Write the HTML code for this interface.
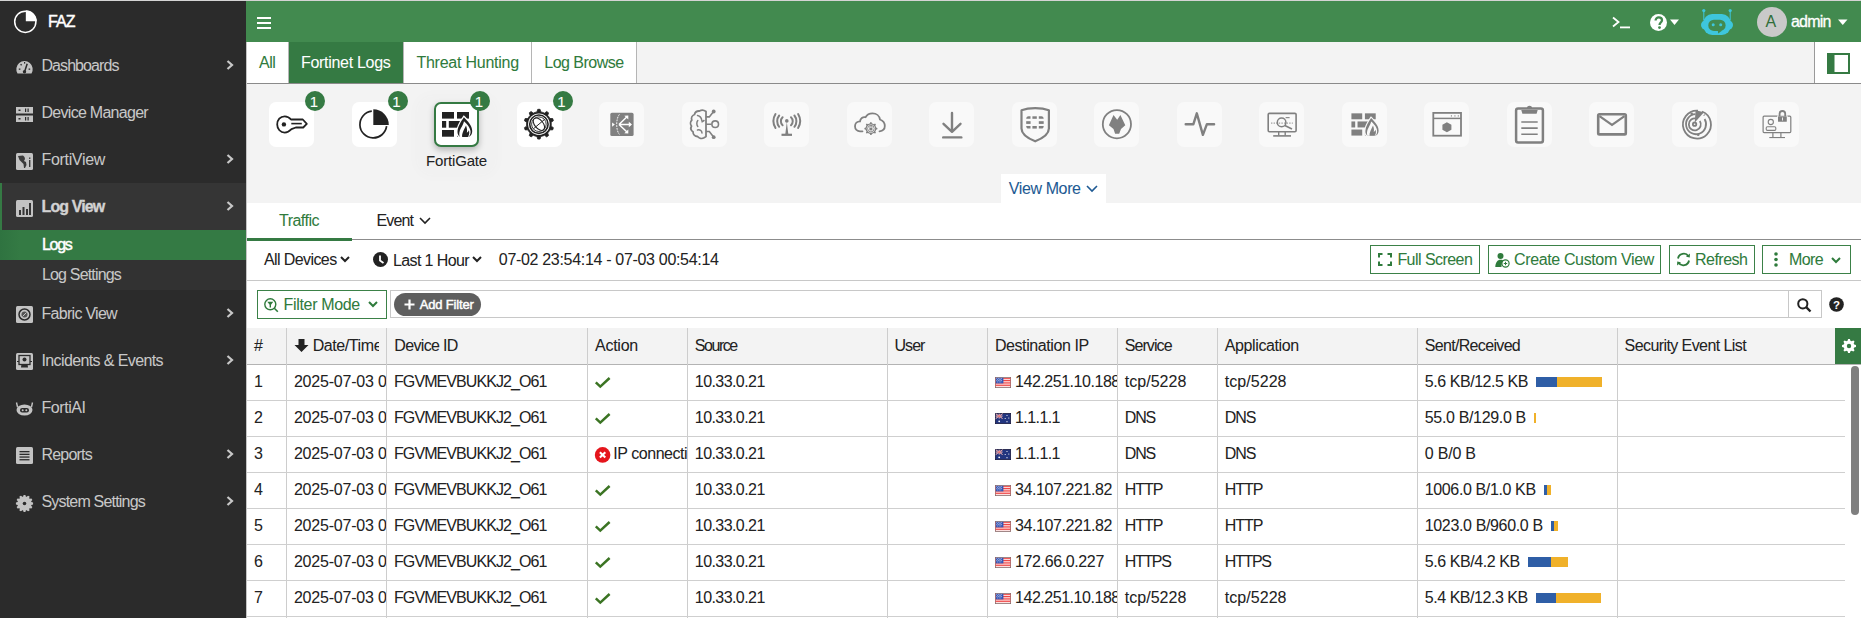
<!DOCTYPE html>
<html><head><meta charset="utf-8">
<style>
*{margin:0;padding:0;box-sizing:border-box}
html,body{width:1861px;height:618px;overflow:hidden;background:#fff;font-family:"Liberation Sans",sans-serif;color:#222;position:relative}
div{-webkit-text-stroke:0.05px currentColor}
svg{overflow:visible}
</style></head><body>
<div style="position:absolute;left:0px;top:0px;width:246px;height:618px;background:#2b2b2b"></div>
<div style="position:absolute;left:0px;top:183px;width:246px;height:47px;background:#353535"></div>
<div style="position:absolute;left:0px;top:183px;width:2px;height:47px;background:#357a44"></div>
<div style="position:absolute;left:0px;top:230px;width:246px;height:60px;background:#323232"></div>
<div style="position:absolute;left:0px;top:230px;width:246px;height:30px;background:linear-gradient(90deg,#2f7340 0px,#347a44 20px)"></div>
<svg style="position:absolute;left:13px;top:9px" width="25" height="25" viewBox="0 0 25 25"><circle cx="12.3" cy="12.8" r="10.6" fill="none" stroke="#fff" stroke-width="1.5"/><path d="M12.8 1.3 A11 11 0 0 1 23.8 12.3 L12.8 12.3 Z" fill="#fff"/></svg>
<div style="position:absolute;left:48.0px;top:14.45px;font-size:16px;line-height:16px;color:#fff;white-space:nowrap;letter-spacing:-0.953px;-webkit-text-stroke:0.45px #fff;">FAZ</div>
<div style="position:absolute;left:41.5px;top:58.45px;font-size:16px;line-height:16px;color:#c8c8c8;white-space:nowrap;letter-spacing:-0.933px;">Dashboards</div>
<svg style="position:absolute;left:226px;top:60px" width="8" height="10" viewBox="0 0 8 10"><path d="M1.5 1 L6 5 L1.5 9" fill="none" stroke="#c8c8c8" stroke-width="2.2"/></svg>
<div style="position:absolute;left:41.5px;top:105.45px;font-size:16px;line-height:16px;color:#c8c8c8;white-space:nowrap;letter-spacing:-0.720px;">Device Manager</div>
<div style="position:absolute;left:41.5px;top:152.45px;font-size:16px;line-height:16px;color:#c8c8c8;white-space:nowrap;letter-spacing:-0.328px;">FortiView</div>
<svg style="position:absolute;left:226px;top:154px" width="8" height="10" viewBox="0 0 8 10"><path d="M1.5 1 L6 5 L1.5 9" fill="none" stroke="#c8c8c8" stroke-width="2.2"/></svg>
<div style="position:absolute;left:41.5px;top:199.45px;font-size:16px;line-height:16px;color:#d2d2d2;white-space:nowrap;letter-spacing:-0.875px;font-weight:bold;-webkit-text-stroke:0.35px #d2d2d2;">Log View</div>
<svg style="position:absolute;left:226px;top:201px" width="8" height="10" viewBox="0 0 8 10"><path d="M1.5 1 L6 5 L1.5 9" fill="none" stroke="#c8c8c8" stroke-width="2.2"/></svg>
<div style="position:absolute;left:41.5px;top:306.45px;font-size:16px;line-height:16px;color:#c8c8c8;white-space:nowrap;letter-spacing:-0.714px;">Fabric View</div>
<svg style="position:absolute;left:226px;top:308px" width="8" height="10" viewBox="0 0 8 10"><path d="M1.5 1 L6 5 L1.5 9" fill="none" stroke="#c8c8c8" stroke-width="2.2"/></svg>
<div style="position:absolute;left:41.5px;top:353.45px;font-size:16px;line-height:16px;color:#c8c8c8;white-space:nowrap;letter-spacing:-0.617px;">Incidents &amp; Events</div>
<svg style="position:absolute;left:226px;top:355px" width="8" height="10" viewBox="0 0 8 10"><path d="M1.5 1 L6 5 L1.5 9" fill="none" stroke="#c8c8c8" stroke-width="2.2"/></svg>
<div style="position:absolute;left:41.5px;top:400.45px;font-size:16px;line-height:16px;color:#c8c8c8;white-space:nowrap;letter-spacing:-0.451px;">FortiAI</div>
<div style="position:absolute;left:41.5px;top:447.45px;font-size:16px;line-height:16px;color:#c8c8c8;white-space:nowrap;letter-spacing:-0.795px;">Reports</div>
<svg style="position:absolute;left:226px;top:449px" width="8" height="10" viewBox="0 0 8 10"><path d="M1.5 1 L6 5 L1.5 9" fill="none" stroke="#c8c8c8" stroke-width="2.2"/></svg>
<div style="position:absolute;left:41.5px;top:494.45px;font-size:16px;line-height:16px;color:#c8c8c8;white-space:nowrap;letter-spacing:-0.811px;">System Settings</div>
<svg style="position:absolute;left:226px;top:496px" width="8" height="10" viewBox="0 0 8 10"><path d="M1.5 1 L6 5 L1.5 9" fill="none" stroke="#c8c8c8" stroke-width="2.2"/></svg>
<div style="position:absolute;left:42.0px;top:236.75px;font-size:16px;line-height:16px;color:#fff;white-space:nowrap;letter-spacing:-1.305px;-webkit-text-stroke:0.45px #fff;">Logs</div>
<div style="position:absolute;left:42.0px;top:267.05px;font-size:16px;line-height:16px;color:#c8c8c8;white-space:nowrap;letter-spacing:-0.836px;">Log Settings</div>
<svg style="position:absolute;left:16px;top:59px" width="17" height="17" viewBox="0 0 17 17"><path d="M1.5 14.5 A8.2 8.2 0 1 1 15.5 14.5 Z" fill="#c3c3c3"/><path d="M8.5 13 L11.2 4.8" stroke="#2b2b2b" stroke-width="1.5"/><circle cx="8.5" cy="12.8" r="1.7" fill="#2b2b2b"/><rect x="2.8" y="9.5" width="1.6" height="1.3" fill="#2b2b2b"/><rect x="12.6" y="9.5" width="1.6" height="1.3" fill="#2b2b2b"/><rect x="4.5" y="5" width="1.3" height="1.5" fill="#2b2b2b" transform="rotate(-45 5.2 5.8)"/><rect x="8" y="3" width="1.2" height="1.6" fill="#2b2b2b"/></svg>
<svg style="position:absolute;left:16px;top:106px" width="17" height="17" viewBox="0 0 17 17"><rect x="0" y="1" width="17" height="6.5" fill="#c3c3c3"/><rect x="0" y="9.5" width="17" height="6.5" fill="#c3c3c3"/><rect x="2.5" y="3.5" width="2" height="1.5" fill="#2b2b2b"/><rect x="2.5" y="12" width="2" height="1.5" fill="#2b2b2b"/><rect x="9" y="2.5" width="1.2" height="3.5" fill="#2b2b2b"/><rect x="11.5" y="2.5" width="1.2" height="3.5" fill="#2b2b2b"/><rect x="9" y="11" width="1.2" height="3.5" fill="#2b2b2b"/><rect x="11.5" y="11" width="1.2" height="3.5" fill="#2b2b2b"/></svg>
<svg style="position:absolute;left:16px;top:153px" width="17" height="17" viewBox="0 0 17 17"><rect x="0" y="0" width="17" height="17" rx="1.5" fill="#c3c3c3"/><path d="M2 3 L7 2.5 L8.5 4 L9 6 L8 8 L10 9 L10.5 12 L9 15 L8 15 L7.5 11 L5.5 9 L3.5 7 Z" fill="#3a3a3a"/><rect x="13" y="7" width="1.4" height="7" fill="#3a3a3a"/><rect x="13" y="4.5" width="1.4" height="1.4" fill="#3a3a3a"/></svg>
<svg style="position:absolute;left:16px;top:200px" width="17" height="17" viewBox="0 0 17 17"><rect x="0" y="0" width="17" height="17" rx="1.5" fill="#c3c3c3"/><rect x="3" y="10" width="2" height="5" fill="#353535"/><rect x="6.5" y="7" width="2" height="8" fill="#353535"/><rect x="10" y="9" width="2" height="6" fill="#353535"/><rect x="13" y="3" width="2" height="12" fill="#353535"/></svg>
<svg style="position:absolute;left:16px;top:306px" width="17" height="17" viewBox="0 0 17 17"><rect x="0" y="0" width="17" height="17" rx="1.5" fill="#c3c3c3"/><circle cx="8.5" cy="8.5" r="5.5" fill="none" stroke="#2b2b2b" stroke-width="1.5"/><circle cx="8.5" cy="8.5" r="3" fill="#555"/><path d="M6.5 10.5 L10.5 6.5" stroke="#c3c3c3" stroke-width="1"/></svg>
<svg style="position:absolute;left:16px;top:353px" width="17" height="17" viewBox="0 0 17 17"><rect x="0" y="0" width="17" height="17" rx="1.5" fill="#c3c3c3"/><rect x="3" y="2.5" width="11" height="9" fill="none" stroke="#2b2b2b" stroke-width="1.3"/><circle cx="8.5" cy="6.5" r="2" fill="#2b2b2b"/><path d="M5 14.5 L5.5 11 L11.5 11 L12 14.5 Z" fill="#2b2b2b"/><rect x="1" y="8" width="2" height="1" fill="#2b2b2b"/><rect x="14" y="8" width="2" height="1" fill="#2b2b2b"/></svg>
<svg style="position:absolute;left:16px;top:399px" width="17" height="17" viewBox="0 0 17 17"><ellipse cx="8.5" cy="11" rx="8" ry="5.5" fill="#c3c3c3"/><path d="M1.5 8 L0.5 3.5 M15.5 8 L16.5 3.5" stroke="#c3c3c3" stroke-width="1.4"/><rect x="4" y="9" width="9" height="4.5" rx="2.2" fill="#2b2b2b"/><circle cx="6.7" cy="11.2" r="1" fill="#c3c3c3"/><circle cx="10.3" cy="11.2" r="1" fill="#c3c3c3"/></svg>
<svg style="position:absolute;left:16px;top:447px" width="17" height="17" viewBox="0 0 17 17"><rect x="0" y="0" width="17" height="17" rx="1.5" fill="#c3c3c3"/><rect x="3.5" y="4" width="10" height="1.3" fill="#2b2b2b"/><rect x="3.5" y="6.7" width="10" height="1.3" fill="#2b2b2b"/><rect x="3.5" y="9.4" width="10" height="1.3" fill="#2b2b2b"/><rect x="3.5" y="12.1" width="10" height="1.3" fill="#2b2b2b"/></svg>
<svg style="position:absolute;left:16px;top:495px" width="17" height="17" viewBox="0 0 17 17"><polygon points="17.10,8.50 17.05,9.40 15.35,9.96 15.16,10.66 16.36,12.00 15.95,12.80 15.46,13.55 13.70,13.18 13.18,13.70 13.55,15.46 12.80,15.95 12.00,16.36 10.66,15.16 9.96,15.35 9.40,17.05 8.50,17.10 7.60,17.05 7.04,15.35 6.34,15.16 5.00,16.36 4.20,15.95 3.45,15.46 3.82,13.70 3.30,13.18 1.54,13.55 1.05,12.80 0.64,12.00 1.84,10.66 1.65,9.96 -0.05,9.40 -0.10,8.50 -0.05,7.60 1.65,7.04 1.84,6.34 0.64,5.00 1.05,4.20 1.54,3.45 3.30,3.82 3.82,3.30 3.45,1.54 4.20,1.05 5.00,0.64 6.34,1.84 7.04,1.65 7.60,-0.05 8.50,-0.10 9.40,-0.05 9.96,1.65 10.66,1.84 12.00,0.64 12.80,1.05 13.55,1.54 13.18,3.30 13.70,3.82 15.46,3.45 15.95,4.20 16.36,5.00 15.16,6.34 15.35,7.04 17.05,7.60" fill="#c3c3c3"/><circle cx="8.5" cy="8.5" r="1.8" fill="#2b2b2b"/></svg>
<div style="position:absolute;left:246px;top:0px;width:1615px;height:42px;background:#428a4f"></div>
<div style="position:absolute;left:0px;top:0px;width:1861px;height:1px;background:#d4d4d4"></div>
<div style="position:absolute;left:256.5px;top:16.5px;width:14px;height:2px;background:#fff"></div>
<div style="position:absolute;left:256.5px;top:21.5px;width:14px;height:2px;background:#fff"></div>
<div style="position:absolute;left:256.5px;top:26.5px;width:14px;height:2px;background:#fff"></div>
<svg style="position:absolute;left:1612px;top:16px" width="19" height="13" viewBox="0 0 19 13"><path d="M1 1.5 L6.5 6 L1 10.5" fill="none" stroke="#fff" stroke-width="1.8"/><rect x="8" y="10.5" width="10" height="1.8" fill="#fff"/></svg>
<svg style="position:absolute;left:1650px;top:14px" width="30" height="18" viewBox="0 0 30 18"><circle cx="8.5" cy="8.5" r="8.5" fill="#fff"/><path d="M5.6 6.6 C5.6 4.6 7 3.3 8.8 3.3 C10.7 3.3 12 4.5 12 6.2 C12 8.3 9.6 8.6 9.6 10.5 L9.6 11" fill="none" stroke="#428a4f" stroke-width="2.3"/><circle cx="9.5" cy="13.6" r="1.4" fill="#428a4f"/><path d="M20 5.5 L29 5.5 L24.5 11 Z" fill="#fff"/></svg>
<svg style="position:absolute;left:1701px;top:8px" width="33" height="28" viewBox="0 0 33 28"><circle cx="2.8" cy="2.6" r="1.6" fill="#3ec6dc"/><circle cx="29.2" cy="2.6" r="1.6" fill="#3ec6dc"/><path d="M2.8 2.6 L2.8 12 M29.2 2.6 L29.2 12" stroke="#3ec6dc" stroke-width="1"/><rect x="2.2" y="6" width="27.6" height="21" rx="9" fill="#3ec6dc"/><rect x="0" y="12.5" width="32" height="9" rx="4.5" fill="#3ec6dc"/><rect x="7.3" y="11.7" width="17.3" height="11.3" rx="5.6" fill="#428a4f"/><path d="M16.8 22.5 L21.2 22.5 L17.2 25.6 Z" fill="#428a4f"/><circle cx="12.2" cy="16.8" r="1.5" fill="#3ec6dc"/><circle cx="19.7" cy="16.8" r="1.5" fill="#3ec6dc"/></svg>
<div style="position:absolute;left:1757px;top:7px;width:30px;height:30px;background:#c9c9c9;border-radius:50%"></div>
<div style="position:absolute;left:1765.5px;top:14.45px;font-size:16px;line-height:16px;color:#2f6e3a;white-space:nowrap;letter-spacing:2.328px;">A</div>
<div style="position:absolute;left:1791.0px;top:14.45px;font-size:16px;line-height:16px;color:#fff;white-space:nowrap;letter-spacing:-0.822px;-webkit-text-stroke:0.3px #fff;">admin</div>
<svg style="position:absolute;left:1838px;top:19px" width="10" height="7" viewBox="0 0 10 7"><path d="M0 0.5 L9.5 0.5 L4.75 6 Z" fill="#fff"/></svg>
<div style="position:absolute;left:246px;top:42px;width:1615px;height:42px;background:#f3f3f3"></div>
<div style="position:absolute;left:246px;top:83px;width:1615px;height:1px;background:#8a8a8a"></div>
<div style="position:absolute;left:246px;top:42px;width:42px;height:41px;background:#fff"></div>
<div style="position:absolute;left:288px;top:42px;width:115px;height:41px;background:#357a43"></div>
<div style="position:absolute;left:403px;top:42px;width:128px;height:41px;background:#fff;border-left:1px solid #b5b5b5"></div>
<div style="position:absolute;left:531px;top:42px;width:106px;height:41px;background:#fff;border-left:1px solid #b5b5b5;border-right:1px solid #b5b5b5"></div>
<div style="position:absolute;left:288px;top:42px;width:1px;height:41px;background:#b5b5b5"></div>
<div style="position:absolute;left:259.0px;top:55.45px;font-size:16px;line-height:16px;color:#2f7b3c;white-space:nowrap;letter-spacing:-0.499px;">All</div>
<div style="position:absolute;left:301.0px;top:55.45px;font-size:16px;line-height:16px;color:#fff;white-space:nowrap;letter-spacing:-0.298px;">Fortinet Logs</div>
<div style="position:absolute;left:416.4px;top:55.45px;font-size:16px;line-height:16px;color:#2f7b3c;white-space:nowrap;letter-spacing:-0.238px;">Threat Hunting</div>
<div style="position:absolute;left:544.3px;top:55.45px;font-size:16px;line-height:16px;color:#2f7b3c;white-space:nowrap;letter-spacing:-0.525px;">Log Browse</div>
<div style="position:absolute;left:1814px;top:42px;width:47px;height:41px;background:#fff;border-left:1px solid #9a9a9a"></div>
<svg style="position:absolute;left:1827px;top:53px" width="23" height="21" viewBox="0 0 23 21"><rect x="1" y="1" width="21" height="19" fill="none" stroke="#357a43" stroke-width="2"/><rect x="1" y="1" width="6.5" height="19" fill="#357a43"/></svg>
<div style="position:absolute;left:246px;top:84px;width:1615px;height:119px;background:#f3f3f3"></div>
<div style="position:absolute;left:269.0px;top:102px;width:45px;height:45px;background:#fff;border-radius:7px"></div>
<svg style="position:absolute;left:269.0px;top:102px" width="45" height="45" viewBox="0 0 45 45"><path d="M15.7 14.3 C11.2 14.3 8.2 18 8.2 22.5 C8.2 27 11.5 30.6 15.7 30.6 C18.5 30.6 20.5 29.3 22.5 27.2 L26.8 25.5 L34.2 25.5 L37.8 21.8 L33.8 17.5 L22 17.5 C20.3 15.3 18.2 14.3 15.7 14.3 Z" fill="none" stroke="#222" stroke-width="1.8" stroke-linejoin="round"/><circle cx="14.9" cy="22.4" r="2.2" fill="#222"/><path d="M22.3 21.6 L32.8 21.6" stroke="#222" stroke-width="1.6"/></svg>
<div style="position:absolute;left:305.0px;top:91px;width:20px;height:20px;background:#357a43;border-radius:50%"></div>
<div style="position:absolute;left:309.8px;top:93.90px;font-size:15px;line-height:15px;color:#fff;white-space:nowrap;letter-spacing:-0.344px;">1</div>
<div style="position:absolute;left:351.5px;top:102px;width:45px;height:45px;background:#fff;border-radius:7px"></div>
<svg style="position:absolute;left:351.5px;top:102px" width="45" height="45" viewBox="0 0 45 45"><path d="M19.8 9.2 A13.4 13.4 0 1 0 34.6 24.2" fill="none" stroke="#222" stroke-width="1.7"/><path d="M21.3 7.3 A15.5 15.5 0 0 1 36.8 22.9 L21.3 22.9 Z" fill="#222"/></svg>
<div style="position:absolute;left:387.5px;top:91px;width:20px;height:20px;background:#357a43;border-radius:50%"></div>
<div style="position:absolute;left:392.3px;top:93.90px;font-size:15px;line-height:15px;color:#fff;white-space:nowrap;letter-spacing:-0.344px;">1</div>
<div style="position:absolute;left:417.0px;top:96px;width:79px;height:79px;border-radius:16px;box-shadow:0 0 10px 4px rgba(0,0,0,0.012);background:rgba(0,0,0,0.008)"></div>
<div style="position:absolute;left:434.0px;top:102px;width:45px;height:45px;background:#fff;border:2px solid #357a43;border-radius:7px;box-shadow:0 3px 6px rgba(0,0,0,0.25)"></div>
<svg style="position:absolute;left:434.0px;top:102px" width="45" height="45" viewBox="0 0 45 45"><rect x="8" y="10" width="12" height="6.6" fill="#222"/><rect x="23" y="10" width="12" height="6.6" fill="#222"/><rect x="8" y="19" width="4.2" height="6.7" fill="#222"/><rect x="14.8" y="19" width="13" height="6.7" fill="#222"/><rect x="8" y="28" width="12" height="6.7" fill="#222"/><rect x="23" y="28" width="5" height="6.7" fill="#222"/><path d="M29.9 15.2 C33.5 19 38.2 23.5 38.2 29 C38.2 32.5 36.2 35 33.5 35 L26.3 35 C24.3 34 23.4 32 23.5 29.5 C23.7 24.5 27 19.5 29.9 15.2 Z" fill="#fff" stroke="#fff" stroke-width="2.6"/><path d="M29.9 15.2 C33.5 19 38.2 23.5 38.2 29 C38.2 32.5 36.2 35 33.5 35 L26.3 35 C24.3 34 23.4 32 23.5 29.5 C23.7 24.5 27 19.5 29.9 15.2 Z" fill="#222"/><path d="M25.8 35 C24.8 32.5 25.2 29 27 26 C28.3 23.8 29.5 21.5 30 19.2 C32.5 21.5 36.5 25.5 36.6 29.8 C36.6 32.2 35.6 34.2 34.2 35 Z" fill="#fff"/><path d="M28.2 35 C27.6 31.8 29.8 28 32 23.4 C33 26 33.4 28.6 32.8 30.8 C33.8 30.2 34.5 29.2 34.9 28.2 C35.6 30.4 35.3 33 33.8 35 Z" fill="#222"/></svg>
<div style="position:absolute;left:470.0px;top:91px;width:20px;height:20px;background:#357a43;border-radius:50%"></div>
<div style="position:absolute;left:474.8px;top:93.90px;font-size:15px;line-height:15px;color:#fff;white-space:nowrap;letter-spacing:-0.344px;">1</div>
<div style="position:absolute;left:516.5px;top:102px;width:45px;height:45px;background:#fff;border-radius:7px"></div>
<svg style="position:absolute;left:516.5px;top:102px" width="45" height="45" viewBox="0 0 45 45"><polygon points="21.90,7.30 23.07,7.35 23.84,9.95 24.79,10.14 25.73,10.41 26.65,10.74 27.53,11.15 29.69,9.50 30.66,10.15 31.58,10.87 30.67,13.43 31.33,14.15 31.93,14.91 32.47,15.72 32.95,16.57 35.67,16.50 36.07,17.60 36.39,18.72 34.15,20.26 34.26,21.23 34.30,22.20 34.26,23.17 34.15,24.14 36.39,25.68 36.07,26.80 35.67,27.90 32.95,27.83 32.47,28.68 31.93,29.49 31.33,30.25 30.67,30.97 31.58,33.53 30.66,34.25 29.69,34.90 27.53,33.25 26.65,33.66 25.73,33.99 24.79,34.26 23.84,34.45 23.07,37.05 21.90,37.10 20.73,37.05 19.96,34.45 19.01,34.26 18.07,33.99 17.15,33.66 16.27,33.25 14.11,34.90 13.14,34.25 12.22,33.53 13.13,30.97 12.47,30.25 11.87,29.49 11.33,28.68 10.85,27.83 8.13,27.90 7.73,26.80 7.41,25.68 9.65,24.14 9.54,23.17 9.50,22.20 9.54,21.23 9.65,20.26 7.41,18.72 7.73,17.60 8.13,16.50 10.85,16.57 11.33,15.72 11.87,14.91 12.47,14.15 13.13,13.43 12.22,10.87 13.14,10.15 14.11,9.50 16.27,11.15 17.15,10.74 18.07,10.41 19.01,10.14 19.96,9.95 20.73,7.35" fill="#222" stroke="#222" stroke-width="0.8" stroke-linejoin="round"/><circle cx="21.9" cy="22.2" r="10.8" fill="#fff"/><circle cx="21.9" cy="22.2" r="9.2" fill="none" stroke="#222" stroke-width="1.6"/><circle cx="21.9" cy="22.2" r="7.3" fill="none" stroke="#222" stroke-width="0.9"/><g transform="rotate(-40 21.9 22.2)"><ellipse cx="21.9" cy="22.2" rx="4.2" ry="7.3" fill="none" stroke="#222" stroke-width="1.1"/><path d="M14.6 22.2 L29.2 22.2" stroke="#222" stroke-width="0.9"/></g></svg>
<div style="position:absolute;left:552.5px;top:91px;width:20px;height:20px;background:#357a43;border-radius:50%"></div>
<div style="position:absolute;left:557.3px;top:93.90px;font-size:15px;line-height:15px;color:#fff;white-space:nowrap;letter-spacing:-0.344px;">1</div>
<div style="position:absolute;left:599.0px;top:102px;width:45px;height:45px;background:#f9f9f9;border-radius:7px"></div>
<svg style="position:absolute;left:599.0px;top:102px" width="45" height="45" viewBox="0 0 45 45"><rect x="11.3" y="10.8" width="23.3" height="23.3" rx="1.6" fill="#808080"/><path d="M20.4 12.4 C16.8 16.5 16.8 28.5 20.4 32.4" fill="none" stroke="#fff" stroke-width="0.9" stroke-dasharray="1.8 1"/><path d="M13.1 20.4 L15.8 22.5 L13.1 24.7 Z" fill="#fff"/><path d="M20 22.5 L31.5 22.5 M20 22.5 L28 14.8 M20 22.5 L28 30" fill="none" stroke="#fff" stroke-width="1.5"/><path d="M29.8 19.8 L33 22.5 L29.8 25.2 Z M29.3 13.4 L29.3 17.5 L25.3 13.8 Z M29.3 31.6 L29.3 27.5 L25.3 31.2 Z" fill="#fff"/></svg>
<div style="position:absolute;left:681.5px;top:102px;width:45px;height:45px;background:#f9f9f9;border-radius:7px"></div>
<svg style="position:absolute;left:681.5px;top:102px" width="45" height="45" viewBox="0 0 45 45"><path d="M24 9.5 C22 8 19.5 7.8 17.5 9 C15 8.8 13 10.5 12.5 12.5 C10 13.5 9 16 9.8 18.2 C8.2 19.8 8.2 22.5 9.5 24 C8.5 26 9 28.5 11 29.8 C11 32.5 13 34.5 15.5 34.5 C17 36.3 20 37 22 35.8 L24 34.5 Z" fill="none" stroke="#808080" stroke-width="1.8" stroke-linejoin="round"/><path d="M15.5 13.5 C18 14 19.5 16 19.8 18.5 M15.8 18.5 C14.5 20 14.5 23 15.8 24.5 M15.5 28 C18 27.5 19.8 28.5 20 31 M20 19.8 L22 18.5" fill="none" stroke="#808080" stroke-width="1.5" stroke-linecap="round"/><path d="M24 14.9 L27.3 14.9 L31.2 10 M24 22.2 L29.5 22.2 M24 29.5 L27.3 29.5 L31.2 34.6" fill="none" stroke="#808080" stroke-width="1.6"/><circle cx="31.7" cy="9.5" r="1.9" fill="#808080"/><circle cx="33.2" cy="22.2" r="3.3" fill="none" stroke="#808080" stroke-width="1.6"/><circle cx="31.7" cy="35.2" r="1.9" fill="#808080"/></svg>
<div style="position:absolute;left:764.0px;top:102px;width:45px;height:45px;background:#f9f9f9;border-radius:7px"></div>
<svg style="position:absolute;left:764.0px;top:102px" width="45" height="45" viewBox="0 0 45 45"><circle cx="22.8" cy="18.9" r="1.8" fill="#808080"/><path d="M22.8 20 L21.3 32 L24.3 32 Z" fill="#808080"/><rect x="17.5" y="31.7" width="10.5" height="2.2" fill="#808080"/><g fill="none" stroke="#808080" stroke-width="2" stroke-linecap="round"><path d="M18.6 15.2 A5.5 5.5 0 0 0 18.6 23.2 M27 15.2 A5.5 5.5 0 0 1 27 23.2"/><path d="M15.2 13.5 A9 9 0 0 0 15.2 24.8 M30.4 13.5 A9 9 0 0 1 30.4 24.8"/><path d="M11.5 12 A13.5 13.5 0 0 0 11.5 26 M34.1 12 A13.5 13.5 0 0 1 34.1 26"/></g></svg>
<div style="position:absolute;left:846.5px;top:102px;width:45px;height:45px;background:#f9f9f9;border-radius:7px"></div>
<svg style="position:absolute;left:846.5px;top:102px" width="45" height="45" viewBox="0 0 45 45"><path d="M15.5 29.3 L13 29.3 C10.2 29.3 8 27.2 8 24.3 C8 21.5 10.2 19.3 13 19.3 C13.3 16.5 15.8 14.5 18.5 15.2 C20 12.5 22.5 11.3 25.5 11.3 C29.5 11.3 32.5 14 33 17.5 C35.8 18.5 37.8 21 37.8 24 C37.8 26.8 35.8 29 32.5 29.3" fill="none" stroke="#808080" stroke-width="1.8" stroke-linecap="round"/><polygon points="30.40,26.60 30.37,27.24 29.10,27.63 28.97,28.14 28.80,28.63 28.57,29.10 28.31,29.54 28.92,30.72 28.50,31.20 28.02,31.62 26.84,31.01 26.40,31.27 25.93,31.50 25.44,31.67 24.93,31.80 24.54,33.07 23.90,33.10 23.26,33.07 22.87,31.80 22.36,31.67 21.87,31.50 21.40,31.27 20.96,31.01 19.78,31.62 19.30,31.20 18.88,30.72 19.49,29.54 19.23,29.10 19.00,28.63 18.83,28.14 18.70,27.63 17.43,27.24 17.40,26.60 17.43,25.96 18.70,25.57 18.83,25.06 19.00,24.57 19.23,24.10 19.49,23.66 18.88,22.48 19.30,22.00 19.78,21.58 20.96,22.19 21.40,21.93 21.87,21.70 22.36,21.53 22.87,21.40 23.26,20.13 23.90,20.10 24.54,20.13 24.93,21.40 25.44,21.53 25.93,21.70 26.40,21.93 26.84,22.19 28.02,21.58 28.50,22.00 28.92,22.48 28.31,23.66 28.57,24.10 28.80,24.57 28.97,25.06 29.10,25.57 30.37,25.96" fill="#808080"/><circle cx="23.9" cy="26.6" r="4.2" fill="#fafafa"/><circle cx="23.9" cy="26.6" r="3.3" fill="none" stroke="#808080" stroke-width="0.9"/><rect x="22.4" y="25.8" width="3" height="2.6" fill="#808080"/><path d="M22.9 25.8 L22.9 24.8 A1 1 0 0 1 24.9 24.8 L24.9 25.8" fill="none" stroke="#808080" stroke-width="0.8"/></svg>
<div style="position:absolute;left:929.0px;top:102px;width:45px;height:45px;background:#f9f9f9;border-radius:7px"></div>
<svg style="position:absolute;left:929.0px;top:102px" width="45" height="45" viewBox="0 0 45 45"><path d="M23 11 L23 29 M14.5 21.8 L23 29.8 L31.5 21.8" fill="none" stroke="#808080" stroke-width="2.4" stroke-linecap="round" stroke-linejoin="round"/><rect x="13" y="34.2" width="20.5" height="2.4" rx="1.2" fill="#808080"/></svg>
<div style="position:absolute;left:1011.5px;top:102px;width:45px;height:45px;background:#f9f9f9;border-radius:7px"></div>
<svg style="position:absolute;left:1011.5px;top:102px" width="45" height="45" viewBox="0 0 45 45"><path d="M23.2 6.2 C18 6.2 13 7 9.5 8.3 L9.5 26.5 C9.5 32 15 36 23.2 39.3 C31.4 36 36.9 32 36.9 26.5 L36.9 8.3 C33.4 7 28.4 6.2 23.2 6.2 Z" fill="none" stroke="#808080" stroke-width="2.2" stroke-linejoin="round"/><g fill="#808080"><path d="M14.2 17.4 C14.2 15.5 15 14.3 16.5 14.3 L18.5 14.3 L18.5 16.7 L14.2 16.7 Z"/><rect x="20.4" y="14.3" width="4.4" height="2.5"/><path d="M26.8 14.3 L29.4 14.3 C30.9 14.3 31.7 15.5 31.7 17.4 L31.7 16.7 L26.8 16.7 Z"/><rect x="14.2" y="19.2" width="4.4" height="2.7"/><rect x="26.8" y="19.2" width="4.9" height="2.7"/><path d="M14.2 24 L18.5 24 L18.5 26.6 L16.5 26.6 C15 26.6 14.2 25.6 14.2 24 Z"/><rect x="20.4" y="24" width="4.4" height="2.6"/><path d="M26.8 24 L31.7 24 C31.7 25.6 30.9 26.6 29.4 26.6 L26.8 26.6 Z"/></g></svg>
<div style="position:absolute;left:1094.0px;top:102px;width:45px;height:45px;background:#f9f9f9;border-radius:7px"></div>
<svg style="position:absolute;left:1094.0px;top:102px" width="45" height="45" viewBox="0 0 45 45"><circle cx="22.9" cy="22.2" r="14.1" fill="none" stroke="#808080" stroke-width="1.8"/><path d="M19.5 13.1 L23.2 17.8 L26.4 13.1 L31.3 23.3 L27 27 L25.2 31.7 L21.1 31.7 L19.5 27 L14.9 23.3 Z" fill="#808080"/></svg>
<div style="position:absolute;left:1176.5px;top:102px;width:45px;height:45px;background:#f9f9f9;border-radius:7px"></div>
<svg style="position:absolute;left:1176.5px;top:102px" width="45" height="45" viewBox="0 0 45 45"><path d="M8.7 22.2 L16.4 22.2 L19.8 11.3 L25.9 32.8 L29.9 22.2 L37.1 22.2" fill="none" stroke="#808080" stroke-width="2.4" stroke-linecap="round" stroke-linejoin="round"/></svg>
<div style="position:absolute;left:1259.0px;top:102px;width:45px;height:45px;background:#f9f9f9;border-radius:7px"></div>
<svg style="position:absolute;left:1259.0px;top:102px" width="45" height="45" viewBox="0 0 45 45"><rect x="9.2" y="11.4" width="27.9" height="18.4" rx="1.2" fill="none" stroke="#808080" stroke-width="1.6"/><path d="M19.7 30 L19.7 33.5 M26.2 30 L26.2 33.5" stroke="#808080" stroke-width="1.4"/><rect x="14.2" y="33.1" width="17.8" height="1.6" fill="#808080"/><circle cx="22.6" cy="20.4" r="4.3" fill="none" stroke="#808080" stroke-width="1.5"/><path d="M25.8 23.6 L33 27" stroke="#808080" stroke-width="1.7"/><path d="M12 21.1 L33.9 21.1" stroke="#808080" stroke-width="0.9" stroke-dasharray="1.4 1.2"/><rect x="26.6" y="15.1" width="4" height="1.1" fill="#808080"/></svg>
<div style="position:absolute;left:1341.5px;top:102px;width:45px;height:45px;background:#f9f9f9;border-radius:7px"></div>
<svg style="position:absolute;left:1341.5px;top:102px" width="45" height="45" viewBox="0 0 45 45"><g transform="translate(23 22.5) scale(0.9) translate(-23.1 -22.4)"><rect x="8" y="10" width="12" height="6.6" fill="#808080"/><rect x="23" y="10" width="12" height="6.6" fill="#808080"/><rect x="8" y="19" width="4.2" height="6.7" fill="#808080"/><rect x="14.8" y="19" width="13" height="6.7" fill="#808080"/><rect x="8" y="28" width="12" height="6.7" fill="#808080"/><rect x="23" y="28" width="5" height="6.7" fill="#808080"/><path d="M29.9 15.2 C33.5 19 38.2 23.5 38.2 29 C38.2 32.5 36.2 35 33.5 35 L26.3 35 C24.3 34 23.4 32 23.5 29.5 C23.7 24.5 27 19.5 29.9 15.2 Z" fill="#f9f9f9" stroke="#f9f9f9" stroke-width="2.6"/><path d="M29.9 15.2 C33.5 19 38.2 23.5 38.2 29 C38.2 32.5 36.2 35 33.5 35 L26.3 35 C24.3 34 23.4 32 23.5 29.5 C23.7 24.5 27 19.5 29.9 15.2 Z" fill="#808080"/><path d="M25.8 35 C24.8 32.5 25.2 29 27 26 C28.3 23.8 29.5 21.5 30 19.2 C32.5 21.5 36.5 25.5 36.6 29.8 C36.6 32.2 35.6 34.2 34.2 35 Z" fill="#f9f9f9"/><path d="M28.2 35 C27.6 31.8 29.8 28 32 23.4 C33 26 33.4 28.6 32.8 30.8 C33.8 30.2 34.5 29.2 34.9 28.2 C35.6 30.4 35.3 33 33.8 35 Z" fill="#808080"/></g></svg>
<div style="position:absolute;left:1424.0px;top:102px;width:45px;height:45px;background:#f9f9f9;border-radius:7px"></div>
<svg style="position:absolute;left:1424.0px;top:102px" width="45" height="45" viewBox="0 0 45 45"><rect x="9.3" y="10.9" width="27.7" height="22.8" fill="none" stroke="#808080" stroke-width="1.8"/><path d="M9.3 16.4 L37 16.4" stroke="#808080" stroke-width="1.5"/><rect x="26.9" y="13.2" width="0.9" height="1.4" fill="#808080"/><rect x="30.5" y="13.2" width="0.9" height="1.4" fill="#808080"/><rect x="33.8" y="13.2" width="0.9" height="1.4" fill="#808080"/><polygon points="22.9,20.3 27.4,22.8 27.4,27.8 22.9,30.3 18.4,27.8 18.4,22.8" fill="#808080"/></svg>
<div style="position:absolute;left:1506.5px;top:102px;width:45px;height:45px;background:#f9f9f9;border-radius:7px"></div>
<svg style="position:absolute;left:1506.5px;top:102px" width="45" height="45" viewBox="0 0 45 45"><rect x="9.1" y="6.5" width="26.8" height="34" rx="2" fill="none" stroke="#808080" stroke-width="2.5"/><path d="M14.3 8 L30.7 8 L29.6 11.7 L15.4 11.7 Z" fill="#808080"/><path d="M19.8 6.5 A2.7 2.7 0 0 1 25.2 6.5" fill="#808080"/><path d="M14.3 20 L30.7 20 M14.3 26.1 L30.7 26.1 M14.3 32.2 L30.7 32.2" stroke="#808080" stroke-width="1.6"/></svg>
<div style="position:absolute;left:1589.0px;top:102px;width:45px;height:45px;background:#f9f9f9;border-radius:7px"></div>
<svg style="position:absolute;left:1589.0px;top:102px" width="45" height="45" viewBox="0 0 45 45"><rect x="9.2" y="12.3" width="27.6" height="20.1" rx="1.2" fill="none" stroke="#808080" stroke-width="2.6"/><path d="M10.5 14.2 L23 22.8 L35.5 14.2" fill="none" stroke="#808080" stroke-width="2.2"/></svg>
<div style="position:absolute;left:1671.5px;top:102px;width:45px;height:45px;background:#f9f9f9;border-radius:7px"></div>
<svg style="position:absolute;left:1671.5px;top:102px" width="45" height="45" viewBox="0 0 45 45"><g fill="none" stroke="#808080" stroke-width="1.8"><path d="M30 9.5 A14 14 0 1 1 26 8.6"/><path d="M32.5 13.5 A14 14 0 0 0 32 12.8" /><path d="M32.6 17 A10 10 0 1 1 23.5 12.2"/><path d="M27.8 19 A6 6 0 1 1 24.5 16.6"/><circle cx="22.6" cy="22.2" r="1.7"/></g><path d="M22.8 20.5 L23.6 8.2 L32 10.3 Z" fill="#808080"/><circle cx="19.7" cy="11.7" r="1.3" fill="#808080"/><circle cx="26.2" cy="32.8" r="1.3" fill="#808080"/></svg>
<div style="position:absolute;left:1754.0px;top:102px;width:45px;height:45px;background:#f9f9f9;border-radius:7px"></div>
<svg style="position:absolute;left:1754.0px;top:102px" width="45" height="45" viewBox="0 0 45 45"><rect x="9.1" y="14.2" width="27.7" height="16.4" rx="1" fill="none" stroke="#808080" stroke-width="1.2"/><path d="M18.9 30.6 L18.9 35 M26.9 30.6 L26.9 35" stroke="#808080" stroke-width="1.2"/><rect x="15.3" y="35" width="15.7" height="1.1" fill="#808080"/><circle cx="16.8" cy="20" r="2.6" fill="none" stroke="#808080" stroke-width="1.1"/><rect x="12.2" y="24.8" width="9.6" height="3.6" rx="1.2" fill="none" stroke="#808080" stroke-width="1.1"/><rect x="23.2" y="13.4" width="10.4" height="7.1" fill="#f9f9f9"/><rect x="24" y="14.2" width="8.8" height="5.6" rx="0.6" fill="#808080"/><path d="M25.6 14.2 L25.6 11.8 A2.8 2.8 0 0 1 31.2 11.8 L31.2 14.2" fill="none" stroke="#808080" stroke-width="1.8"/><rect x="28" y="15.5" width="0.9" height="3" fill="#f9f9f9"/></svg>
<div style="position:absolute;left:426.0px;top:152.70px;font-size:15px;line-height:15px;color:#222;white-space:nowrap;letter-spacing:-0.170px;">FortiGate</div>
<div style="position:absolute;left:1001px;top:174px;width:105px;height:29px;background:#fff"></div>
<div style="position:absolute;left:1008.7px;top:181.45px;font-size:16px;line-height:16px;color:#1e5a93;white-space:nowrap;letter-spacing:-0.372px;">View More</div>
<svg style="position:absolute;left:1086px;top:185px" width="12" height="8" viewBox="0 0 12 8"><path d="M1 1 L6 6 L11 1" fill="none" stroke="#1e5a93" stroke-width="1.6"/></svg>
<div style="position:absolute;left:246px;top:203px;width:1615px;height:415px;background:#fff"></div>
<div style="position:absolute;left:246px;top:239px;width:1615px;height:1px;background:#8c8c8c"></div>
<div style="position:absolute;left:247px;top:238px;width:105px;height:3px;background:#357a43"></div>
<div style="position:absolute;left:279.0px;top:213.25px;font-size:16px;line-height:16px;color:#2f7b3c;white-space:nowrap;letter-spacing:-0.516px;">Traffic</div>
<div style="position:absolute;left:376.6px;top:213.25px;font-size:16px;line-height:16px;color:#222;white-space:nowrap;letter-spacing:-0.908px;">Event</div>
<svg style="position:absolute;left:419px;top:217px" width="12" height="8" viewBox="0 0 12 8"><path d="M1 1 L6 6 L11 1" fill="none" stroke="#222" stroke-width="1.6"/></svg>
<div style="position:absolute;left:264.0px;top:252.25px;font-size:16px;line-height:16px;color:#222;white-space:nowrap;letter-spacing:-0.599px;">All Devices</div>
<svg style="position:absolute;left:340px;top:255.8px" width="10" height="7" viewBox="0 0 10 7"><path d="M1 1 L5 5 L9 1" fill="none" stroke="#222" stroke-width="2"/></svg>
<svg style="position:absolute;left:373px;top:252px" width="15" height="15" viewBox="0 0 15 15"><circle cx="7.5" cy="7.5" r="7.5" fill="#222"/><path d="M7 3.5 L7 8.5 L10.5 11" fill="none" stroke="#fff" stroke-width="1.8"/></svg>
<div style="position:absolute;left:393.0px;top:252.75px;font-size:16px;line-height:16px;color:#222;white-space:nowrap;letter-spacing:-0.616px;">Last 1 Hour</div>
<svg style="position:absolute;left:472px;top:255.8px" width="10" height="7" viewBox="0 0 10 7"><path d="M1 1 L5 5 L9 1" fill="none" stroke="#222" stroke-width="2"/></svg>
<div style="position:absolute;left:498.8px;top:252.25px;font-size:16px;line-height:16px;color:#222;white-space:nowrap;letter-spacing:-0.314px;">07-02 23:54:14 - 07-03 00:54:14</div>
<div style="position:absolute;left:246px;top:280px;width:1615px;height:1px;background:#c8c8c8"></div>
<div style="position:absolute;left:1370px;top:245px;width:110px;height:29px;border:1px solid #3b8147"></div>
<div style="position:absolute;left:1488px;top:245px;width:173px;height:29px;border:1px solid #3b8147"></div>
<div style="position:absolute;left:1669px;top:245px;width:86px;height:29px;border:1px solid #3b8147"></div>
<div style="position:absolute;left:1762px;top:245px;width:89px;height:29px;border:1px solid #3b8147"></div>
<svg style="position:absolute;left:1378px;top:253px" width="14" height="13" viewBox="0 0 14 13"><path d="M1 4.5 L1 1 L4.5 1 M9.5 1 L13 1 L13 4.5 M13 8.5 L13 12 L9.5 12 M4.5 12 L1 12 L1 8.5" fill="none" stroke="#2f7b3c" stroke-width="2"/></svg>
<div style="position:absolute;left:1397.4px;top:252.25px;font-size:16px;line-height:16px;color:#2f7b3c;white-space:nowrap;letter-spacing:-0.544px;">Full Screen</div>
<svg style="position:absolute;left:1494.5px;top:252.5px" width="15" height="14" viewBox="0 0 15 14"><circle cx="5.5" cy="3" r="3" fill="#2f7b3c"/><path d="M0.3 14 C0.5 9.5 2.5 6.8 5.5 6.8 C7 6.8 8 7.3 8.7 8 C7.2 9 6.5 11 6.5 14 Z" fill="#2f7b3c"/><circle cx="10.5" cy="10.5" r="3.6" fill="#fff" stroke="#2f7b3c" stroke-width="1.2"/><path d="M10.5 8.8 L10.5 12.2 M8.8 10.5 L12.2 10.5" stroke="#2f7b3c" stroke-width="1"/></svg>
<div style="position:absolute;left:1514.0px;top:252.25px;font-size:16px;line-height:16px;color:#2f7b3c;white-space:nowrap;letter-spacing:-0.364px;">Create Custom View</div>
<svg style="position:absolute;left:1676px;top:252px" width="15" height="15" viewBox="0 0 15 15"><path d="M2 6.5 A5.8 5.8 0 0 1 12.5 4.2 M13 8.5 A5.8 5.8 0 0 1 2.5 10.8" fill="none" stroke="#2f7b3c" stroke-width="1.9"/><path d="M10 4.8 L13.8 5.6 L13.9 1.5 Z M5 10.2 L1.2 9.4 L1.1 13.5 Z" fill="#2f7b3c"/></svg>
<div style="position:absolute;left:1695.0px;top:252.25px;font-size:16px;line-height:16px;color:#2f7b3c;white-space:nowrap;letter-spacing:-0.509px;">Refresh</div>
<svg style="position:absolute;left:1774px;top:252px" width="4" height="15" viewBox="0 0 4 15"><circle cx="2" cy="2" r="1.8" fill="#2f7b3c"/><circle cx="2" cy="7.5" r="1.8" fill="#2f7b3c"/><circle cx="2" cy="13" r="1.8" fill="#2f7b3c"/></svg>
<div style="position:absolute;left:1789.0px;top:252.25px;font-size:16px;line-height:16px;color:#2f7b3c;white-space:nowrap;letter-spacing:-0.617px;">More</div>
<svg style="position:absolute;left:1831px;top:256.5px" width="10" height="7" viewBox="0 0 10 7"><path d="M1 1 L5 5 L9 1" fill="none" stroke="#2f7b3c" stroke-width="2"/></svg>
<div style="position:absolute;left:257px;top:290px;width:130px;height:29px;border:1px solid #3b8147"></div>
<svg style="position:absolute;left:264px;top:298px" width="15" height="15" viewBox="0 0 15 15"><circle cx="6.3" cy="6.3" r="5.5" fill="none" stroke="#2f7b3c" stroke-width="1.4"/><path d="M10.3 10.3 L13.8 13.8" stroke="#2f7b3c" stroke-width="1.6"/><path d="M3.3 3.8 L9.3 3.8 L7 6.8 L7 9.5 L5.6 9.5 L5.6 6.8 Z" fill="#2f7b3c"/></svg>
<div style="position:absolute;left:283.6px;top:297.25px;font-size:16px;line-height:16px;color:#2f7b3c;white-space:nowrap;letter-spacing:-0.336px;">Filter Mode</div>
<svg style="position:absolute;left:368px;top:301px" width="10" height="7" viewBox="0 0 10 7"><path d="M1 1 L5 5 L9 1" fill="none" stroke="#2f7b3c" stroke-width="2"/></svg>
<div style="position:absolute;left:390px;top:290px;width:1432px;height:28px;border:1px solid #c8c8c8"></div>
<div style="position:absolute;left:1788px;top:290px;width:1px;height:28px;background:#c8c8c8"></div>
<div style="position:absolute;left:394px;top:293px;width:87px;height:23px;background:#5f5f5f;border-radius:12px"></div>
<svg style="position:absolute;left:403.5px;top:299px" width="11" height="11" viewBox="0 0 11 11"><path d="M5.5 0.5 L5.5 10.5 M0.5 5.5 L10.5 5.5" stroke="#fff" stroke-width="2.2"/></svg>
<div style="position:absolute;left:419.7px;top:298.29px;font-size:13px;line-height:13px;color:#fff;white-space:nowrap;letter-spacing:-0.164px;-webkit-text-stroke:0.45px #fff;">Add Filter</div>
<svg style="position:absolute;left:1797px;top:298px" width="16" height="14" viewBox="0 0 16 14"><circle cx="5.8" cy="5.8" r="4.6" fill="none" stroke="#222" stroke-width="2"/><path d="M9.2 9.2 L13.5 13.5" stroke="#222" stroke-width="2.4"/></svg>
<svg style="position:absolute;left:1829px;top:297px" width="15" height="15" viewBox="0 0 15 15"><circle cx="7.5" cy="7.5" r="7.3" fill="#222"/><text x="7.5" y="11.8" font-size="11.5" font-weight="bold" text-anchor="middle" fill="#fff" font-family="Liberation Sans">?</text></svg>
<div style="position:absolute;left:246px;top:328px;width:1589px;height:36px;background:#f3f3f3"></div>
<div style="position:absolute;left:246px;top:364px;width:1615px;height:1px;background:#b3b3b3"></div>
<div style="position:absolute;left:1835px;top:328px;width:26px;height:36px;background:#357a43"></div>
<svg style="position:absolute;left:1841.5px;top:338.5px" width="14" height="14" viewBox="0 0 14 14"><polygon points="14.00,7.00 13.94,7.91 12.22,8.40 11.99,9.07 11.68,9.70 12.55,11.26 11.95,11.95 11.26,12.55 9.70,11.68 9.07,11.99 8.40,12.22 7.91,13.94 7.00,14.00 6.09,13.94 5.60,12.22 4.93,11.99 4.30,11.68 2.74,12.55 2.05,11.95 1.45,11.26 2.32,9.70 2.01,9.07 1.78,8.40 0.06,7.91 0.00,7.00 0.06,6.09 1.78,5.60 2.01,4.93 2.32,4.30 1.45,2.74 2.05,2.05 2.74,1.45 4.30,2.32 4.93,2.01 5.60,1.78 6.09,0.06 7.00,0.00 7.91,0.06 8.40,1.78 9.07,2.01 9.70,2.32 11.26,1.45 11.95,2.05 12.55,2.74 11.68,4.30 11.99,4.93 12.22,5.60 13.94,6.09" fill="#fff"/><circle cx="7" cy="7" r="2.2" fill="#357a43"/></svg>
<div style="position:absolute;left:286.0px;top:328px;width:1px;height:290px;background:#cdcdcd"></div>
<div style="position:absolute;left:385.8px;top:328px;width:1px;height:290px;background:#cdcdcd"></div>
<div style="position:absolute;left:587.2px;top:328px;width:1px;height:290px;background:#cdcdcd"></div>
<div style="position:absolute;left:686.9px;top:328px;width:1px;height:290px;background:#cdcdcd"></div>
<div style="position:absolute;left:886.9px;top:328px;width:1px;height:290px;background:#cdcdcd"></div>
<div style="position:absolute;left:987.0px;top:328px;width:1px;height:290px;background:#cdcdcd"></div>
<div style="position:absolute;left:1116.8px;top:328px;width:1px;height:290px;background:#cdcdcd"></div>
<div style="position:absolute;left:1216.9px;top:328px;width:1px;height:290px;background:#cdcdcd"></div>
<div style="position:absolute;left:1416.8px;top:328px;width:1px;height:290px;background:#cdcdcd"></div>
<div style="position:absolute;left:1616.7px;top:328px;width:1px;height:290px;background:#cdcdcd"></div>
<div style="position:absolute;left:254.0px;top:338.45px;font-size:16px;line-height:16px;color:#222;white-space:nowrap;letter-spacing:-0.906px;">#</div>
<div style="position:absolute;left:312.7px;top:338.45px;font-size:16px;line-height:16px;color:#222;white-space:nowrap;letter-spacing:-0.420px;width:66.8px;overflow:hidden;">Date/Time</div>
<div style="position:absolute;left:394.3px;top:338.45px;font-size:16px;line-height:16px;color:#222;white-space:nowrap;letter-spacing:-0.656px;">Device ID</div>
<div style="position:absolute;left:595.0px;top:338.45px;font-size:16px;line-height:16px;color:#222;white-space:nowrap;letter-spacing:-0.250px;">Action</div>
<div style="position:absolute;left:694.8px;top:338.45px;font-size:16px;line-height:16px;color:#222;white-space:nowrap;letter-spacing:-1.453px;">Source</div>
<div style="position:absolute;left:894.5px;top:338.45px;font-size:16px;line-height:16px;color:#222;white-space:nowrap;letter-spacing:-0.949px;">User</div>
<div style="position:absolute;left:994.9px;top:338.45px;font-size:16px;line-height:16px;color:#222;white-space:nowrap;letter-spacing:-0.407px;">Destination IP</div>
<div style="position:absolute;left:1124.7px;top:338.45px;font-size:16px;line-height:16px;color:#222;white-space:nowrap;letter-spacing:-0.911px;">Service</div>
<div style="position:absolute;left:1224.8px;top:338.45px;font-size:16px;line-height:16px;color:#222;white-space:nowrap;letter-spacing:-0.395px;">Application</div>
<div style="position:absolute;left:1424.7px;top:338.45px;font-size:16px;line-height:16px;color:#222;white-space:nowrap;letter-spacing:-0.665px;">Sent/Received</div>
<div style="position:absolute;left:1624.6px;top:338.45px;font-size:16px;line-height:16px;color:#222;white-space:nowrap;letter-spacing:-0.584px;">Security Event List</div>
<svg style="position:absolute;left:294px;top:339px" width="15" height="13" viewBox="0 0 15 13"><path d="M4.5 0 L10.5 0 L10.5 6 L14.5 6 L7.5 13 L0.5 6 L4.5 6 Z" fill="#222"/></svg>
<div style="position:absolute;left:254.0px;top:373.65px;font-size:16px;line-height:16px;color:#222;white-space:nowrap;letter-spacing:-2.406px;">1</div>
<div style="position:absolute;left:293.9px;top:373.65px;font-size:16px;line-height:16px;color:#222;white-space:nowrap;letter-spacing:-0.196px;width:92.1px;overflow:hidden;">2025-07-03 00:54:14</div>
<div style="position:absolute;left:394.0px;top:373.65px;font-size:16px;line-height:16px;color:#222;white-space:nowrap;letter-spacing:-0.921px;">FGVMEVBUKKJ2_O61</div>
<svg style="position:absolute;left:595px;top:377px" width="16" height="11" viewBox="0 0 16 11"><path d="M0.8 5.3 L5.3 9.6 L14.6 1" fill="none" stroke="#3b7423" stroke-width="2.5"/></svg>
<div style="position:absolute;left:694.8px;top:373.65px;font-size:16px;line-height:16px;color:#222;white-space:nowrap;letter-spacing:-0.570px;">10.33.0.21</div>
<svg style="position:absolute;left:995px;top:377px" width="16" height="11" viewBox="0 0 16 11"><rect x="0.4" y="0.4" width="15.2" height="10.2" fill="#fff" stroke="#8a6a6a" stroke-width="0.8"/><rect x="0.5" y="1.20" width="15" height="0.95" fill="#e33"/><rect x="0.5" y="2.95" width="15" height="0.95" fill="#e33"/><rect x="0.5" y="4.70" width="15" height="0.95" fill="#e33"/><rect x="0.5" y="6.45" width="15" height="0.95" fill="#e33"/><rect x="0.5" y="8.20" width="15" height="0.95" fill="#e33"/><rect x="0.8" y="0.8" width="7.6" height="5.6" fill="#3555b5"/><circle cx="1.80" cy="1.60" r="0.45" fill="#fff"/><circle cx="3.40" cy="1.60" r="0.45" fill="#fff"/><circle cx="5.00" cy="1.60" r="0.45" fill="#fff"/><circle cx="6.60" cy="1.60" r="0.45" fill="#fff"/><circle cx="2.60" cy="2.70" r="0.45" fill="#fff"/><circle cx="4.20" cy="2.70" r="0.45" fill="#fff"/><circle cx="5.80" cy="2.70" r="0.45" fill="#fff"/><circle cx="1.80" cy="3.80" r="0.45" fill="#fff"/><circle cx="3.40" cy="3.80" r="0.45" fill="#fff"/><circle cx="5.00" cy="3.80" r="0.45" fill="#fff"/><circle cx="6.60" cy="3.80" r="0.45" fill="#fff"/><circle cx="2.60" cy="4.90" r="0.45" fill="#fff"/><circle cx="4.20" cy="4.90" r="0.45" fill="#fff"/><circle cx="5.80" cy="4.90" r="0.45" fill="#fff"/></svg>
<div style="position:absolute;left:1015.0px;top:373.65px;font-size:16px;line-height:16px;color:#222;white-space:nowrap;letter-spacing:-0.460px;width:102.0px;overflow:hidden;">142.251.10.188</div>
<div style="position:absolute;left:1124.7px;top:373.65px;font-size:16px;line-height:16px;color:#222;white-space:nowrap;letter-spacing:0.045px;">tcp/5228</div>
<div style="position:absolute;left:1224.8px;top:373.65px;font-size:16px;line-height:16px;color:#222;white-space:nowrap;letter-spacing:0.045px;">tcp/5228</div>
<div style="position:absolute;left:1424.8px;top:373.65px;font-size:16px;line-height:16px;color:#222;white-space:nowrap;letter-spacing:-0.449px;">5.6 KB/12.5 KB</div>
<div style="position:absolute;left:1536px;top:377px;width:21px;height:10px;background:#2f5ea6"></div>
<div style="position:absolute;left:1557px;top:377px;width:45px;height:10px;background:#f0b12a"></div>
<div style="position:absolute;left:247px;top:400px;width:1598px;height:1px;background:#cfcfcf"></div>
<div style="position:absolute;left:254.0px;top:409.65px;font-size:16px;line-height:16px;color:#222;white-space:nowrap;letter-spacing:-1.406px;">2</div>
<div style="position:absolute;left:293.9px;top:409.65px;font-size:16px;line-height:16px;color:#222;white-space:nowrap;letter-spacing:-0.196px;width:92.1px;overflow:hidden;">2025-07-03 00:54:14</div>
<div style="position:absolute;left:394.0px;top:409.65px;font-size:16px;line-height:16px;color:#222;white-space:nowrap;letter-spacing:-0.921px;">FGVMEVBUKKJ2_O61</div>
<svg style="position:absolute;left:595px;top:413px" width="16" height="11" viewBox="0 0 16 11"><path d="M0.8 5.3 L5.3 9.6 L14.6 1" fill="none" stroke="#3b7423" stroke-width="2.5"/></svg>
<div style="position:absolute;left:694.8px;top:409.65px;font-size:16px;line-height:16px;color:#222;white-space:nowrap;letter-spacing:-0.570px;">10.33.0.21</div>
<svg style="position:absolute;left:995px;top:413px" width="16" height="11" viewBox="0 0 16 11"><rect x="0.4" y="0.4" width="15.2" height="10.2" fill="#22357f" stroke="#1a1a40" stroke-width="0.8"/><path d="M0.8 0.8 L7.5 5.5 M7.5 0.8 L0.8 5.5 M4.2 0.8 L4.2 5.5 M0.8 3.1 L7.5 3.1" stroke="#fff" stroke-width="0.9"/><path d="M0.8 0.8 L7.5 5.5 M7.5 0.8 L0.8 5.5 M4.2 0.8 L4.2 5.5 M0.8 3.1 L7.5 3.1" stroke="#d44" stroke-width="0.45"/><circle cx="4.2" cy="8.3" r="0.9" fill="#fff"/><circle cx="12" cy="2.5" r="0.6" fill="#fff"/><circle cx="10.2" cy="5.5" r="0.6" fill="#fff"/><circle cx="13.8" cy="5" r="0.6" fill="#fff"/><circle cx="12" cy="8.7" r="0.6" fill="#fff"/></svg>
<div style="position:absolute;left:1015.0px;top:409.65px;font-size:16px;line-height:16px;color:#222;white-space:nowrap;letter-spacing:-0.569px;">1.1.1.1</div>
<div style="position:absolute;left:1124.7px;top:409.65px;font-size:16px;line-height:16px;color:#222;white-space:nowrap;letter-spacing:-1.099px;">DNS</div>
<div style="position:absolute;left:1224.8px;top:409.65px;font-size:16px;line-height:16px;color:#222;white-space:nowrap;letter-spacing:-1.099px;">DNS</div>
<div style="position:absolute;left:1424.8px;top:409.65px;font-size:16px;line-height:16px;color:#222;white-space:nowrap;letter-spacing:-0.340px;">55.0 B/129.0 B</div>
<div style="position:absolute;left:1534px;top:413px;width:2px;height:10px;background:#f0b12a"></div>
<div style="position:absolute;left:247px;top:436px;width:1598px;height:1px;background:#cfcfcf"></div>
<div style="position:absolute;left:254.0px;top:445.65px;font-size:16px;line-height:16px;color:#222;white-space:nowrap;letter-spacing:-1.406px;">3</div>
<div style="position:absolute;left:293.9px;top:445.65px;font-size:16px;line-height:16px;color:#222;white-space:nowrap;letter-spacing:-0.196px;width:92.1px;overflow:hidden;">2025-07-03 00:54:14</div>
<div style="position:absolute;left:394.0px;top:445.65px;font-size:16px;line-height:16px;color:#222;white-space:nowrap;letter-spacing:-0.921px;">FGVMEVBUKKJ2_O61</div>
<svg style="position:absolute;left:595px;top:447px" width="16" height="16" viewBox="0 0 16 16"><circle cx="7.6" cy="7.9" r="7.8" fill="#e5151c"/><path d="M4.9 5.2 L10.3 10.6 M10.3 5.2 L4.9 10.6" stroke="#fff" stroke-width="2.1"/></svg>
<div style="position:absolute;left:613.3px;top:445.65px;font-size:16px;line-height:16px;color:#222;white-space:nowrap;letter-spacing:-0.449px;width:73.7px;overflow:hidden;">IP connection blocked</div>
<div style="position:absolute;left:694.8px;top:445.65px;font-size:16px;line-height:16px;color:#222;white-space:nowrap;letter-spacing:-0.570px;">10.33.0.21</div>
<svg style="position:absolute;left:995px;top:449px" width="16" height="11" viewBox="0 0 16 11"><rect x="0.4" y="0.4" width="15.2" height="10.2" fill="#22357f" stroke="#1a1a40" stroke-width="0.8"/><path d="M0.8 0.8 L7.5 5.5 M7.5 0.8 L0.8 5.5 M4.2 0.8 L4.2 5.5 M0.8 3.1 L7.5 3.1" stroke="#fff" stroke-width="0.9"/><path d="M0.8 0.8 L7.5 5.5 M7.5 0.8 L0.8 5.5 M4.2 0.8 L4.2 5.5 M0.8 3.1 L7.5 3.1" stroke="#d44" stroke-width="0.45"/><circle cx="4.2" cy="8.3" r="0.9" fill="#fff"/><circle cx="12" cy="2.5" r="0.6" fill="#fff"/><circle cx="10.2" cy="5.5" r="0.6" fill="#fff"/><circle cx="13.8" cy="5" r="0.6" fill="#fff"/><circle cx="12" cy="8.7" r="0.6" fill="#fff"/></svg>
<div style="position:absolute;left:1015.0px;top:445.65px;font-size:16px;line-height:16px;color:#222;white-space:nowrap;letter-spacing:-0.569px;">1.1.1.1</div>
<div style="position:absolute;left:1124.7px;top:445.65px;font-size:16px;line-height:16px;color:#222;white-space:nowrap;letter-spacing:-1.099px;">DNS</div>
<div style="position:absolute;left:1224.8px;top:445.65px;font-size:16px;line-height:16px;color:#222;white-space:nowrap;letter-spacing:-1.099px;">DNS</div>
<div style="position:absolute;left:1424.8px;top:445.65px;font-size:16px;line-height:16px;color:#222;white-space:nowrap;letter-spacing:-0.217px;">0 B/0 B</div>
<div style="position:absolute;left:247px;top:472px;width:1598px;height:1px;background:#cfcfcf"></div>
<div style="position:absolute;left:254.0px;top:481.65px;font-size:16px;line-height:16px;color:#222;white-space:nowrap;letter-spacing:-1.406px;">4</div>
<div style="position:absolute;left:293.9px;top:481.65px;font-size:16px;line-height:16px;color:#222;white-space:nowrap;letter-spacing:-0.196px;width:92.1px;overflow:hidden;">2025-07-03 00:54:14</div>
<div style="position:absolute;left:394.0px;top:481.65px;font-size:16px;line-height:16px;color:#222;white-space:nowrap;letter-spacing:-0.921px;">FGVMEVBUKKJ2_O61</div>
<svg style="position:absolute;left:595px;top:485px" width="16" height="11" viewBox="0 0 16 11"><path d="M0.8 5.3 L5.3 9.6 L14.6 1" fill="none" stroke="#3b7423" stroke-width="2.5"/></svg>
<div style="position:absolute;left:694.8px;top:481.65px;font-size:16px;line-height:16px;color:#222;white-space:nowrap;letter-spacing:-0.570px;">10.33.0.21</div>
<svg style="position:absolute;left:995px;top:485px" width="16" height="11" viewBox="0 0 16 11"><rect x="0.4" y="0.4" width="15.2" height="10.2" fill="#fff" stroke="#8a6a6a" stroke-width="0.8"/><rect x="0.5" y="1.20" width="15" height="0.95" fill="#e33"/><rect x="0.5" y="2.95" width="15" height="0.95" fill="#e33"/><rect x="0.5" y="4.70" width="15" height="0.95" fill="#e33"/><rect x="0.5" y="6.45" width="15" height="0.95" fill="#e33"/><rect x="0.5" y="8.20" width="15" height="0.95" fill="#e33"/><rect x="0.8" y="0.8" width="7.6" height="5.6" fill="#3555b5"/><circle cx="1.80" cy="1.60" r="0.45" fill="#fff"/><circle cx="3.40" cy="1.60" r="0.45" fill="#fff"/><circle cx="5.00" cy="1.60" r="0.45" fill="#fff"/><circle cx="6.60" cy="1.60" r="0.45" fill="#fff"/><circle cx="2.60" cy="2.70" r="0.45" fill="#fff"/><circle cx="4.20" cy="2.70" r="0.45" fill="#fff"/><circle cx="5.80" cy="2.70" r="0.45" fill="#fff"/><circle cx="1.80" cy="3.80" r="0.45" fill="#fff"/><circle cx="3.40" cy="3.80" r="0.45" fill="#fff"/><circle cx="5.00" cy="3.80" r="0.45" fill="#fff"/><circle cx="6.60" cy="3.80" r="0.45" fill="#fff"/><circle cx="2.60" cy="4.90" r="0.45" fill="#fff"/><circle cx="4.20" cy="4.90" r="0.45" fill="#fff"/><circle cx="5.80" cy="4.90" r="0.45" fill="#fff"/></svg>
<div style="position:absolute;left:1015.0px;top:481.65px;font-size:16px;line-height:16px;color:#222;white-space:nowrap;letter-spacing:-0.417px;">34.107.221.82</div>
<div style="position:absolute;left:1124.7px;top:481.65px;font-size:16px;line-height:16px;color:#222;white-space:nowrap;letter-spacing:-1.049px;">HTTP</div>
<div style="position:absolute;left:1224.8px;top:481.65px;font-size:16px;line-height:16px;color:#222;white-space:nowrap;letter-spacing:-1.049px;">HTTP</div>
<div style="position:absolute;left:1424.8px;top:481.65px;font-size:16px;line-height:16px;color:#222;white-space:nowrap;letter-spacing:-0.375px;">1006.0 B/1.0 KB</div>
<div style="position:absolute;left:1544px;top:485px;width:3px;height:10px;background:#2f5ea6"></div>
<div style="position:absolute;left:1547px;top:485px;width:3.5px;height:10px;background:#f0b12a"></div>
<div style="position:absolute;left:247px;top:508px;width:1598px;height:1px;background:#cfcfcf"></div>
<div style="position:absolute;left:254.0px;top:517.65px;font-size:16px;line-height:16px;color:#222;white-space:nowrap;letter-spacing:-1.406px;">5</div>
<div style="position:absolute;left:293.9px;top:517.65px;font-size:16px;line-height:16px;color:#222;white-space:nowrap;letter-spacing:-0.196px;width:92.1px;overflow:hidden;">2025-07-03 00:54:14</div>
<div style="position:absolute;left:394.0px;top:517.65px;font-size:16px;line-height:16px;color:#222;white-space:nowrap;letter-spacing:-0.921px;">FGVMEVBUKKJ2_O61</div>
<svg style="position:absolute;left:595px;top:521px" width="16" height="11" viewBox="0 0 16 11"><path d="M0.8 5.3 L5.3 9.6 L14.6 1" fill="none" stroke="#3b7423" stroke-width="2.5"/></svg>
<div style="position:absolute;left:694.8px;top:517.65px;font-size:16px;line-height:16px;color:#222;white-space:nowrap;letter-spacing:-0.570px;">10.33.0.21</div>
<svg style="position:absolute;left:995px;top:521px" width="16" height="11" viewBox="0 0 16 11"><rect x="0.4" y="0.4" width="15.2" height="10.2" fill="#fff" stroke="#8a6a6a" stroke-width="0.8"/><rect x="0.5" y="1.20" width="15" height="0.95" fill="#e33"/><rect x="0.5" y="2.95" width="15" height="0.95" fill="#e33"/><rect x="0.5" y="4.70" width="15" height="0.95" fill="#e33"/><rect x="0.5" y="6.45" width="15" height="0.95" fill="#e33"/><rect x="0.5" y="8.20" width="15" height="0.95" fill="#e33"/><rect x="0.8" y="0.8" width="7.6" height="5.6" fill="#3555b5"/><circle cx="1.80" cy="1.60" r="0.45" fill="#fff"/><circle cx="3.40" cy="1.60" r="0.45" fill="#fff"/><circle cx="5.00" cy="1.60" r="0.45" fill="#fff"/><circle cx="6.60" cy="1.60" r="0.45" fill="#fff"/><circle cx="2.60" cy="2.70" r="0.45" fill="#fff"/><circle cx="4.20" cy="2.70" r="0.45" fill="#fff"/><circle cx="5.80" cy="2.70" r="0.45" fill="#fff"/><circle cx="1.80" cy="3.80" r="0.45" fill="#fff"/><circle cx="3.40" cy="3.80" r="0.45" fill="#fff"/><circle cx="5.00" cy="3.80" r="0.45" fill="#fff"/><circle cx="6.60" cy="3.80" r="0.45" fill="#fff"/><circle cx="2.60" cy="4.90" r="0.45" fill="#fff"/><circle cx="4.20" cy="4.90" r="0.45" fill="#fff"/><circle cx="5.80" cy="4.90" r="0.45" fill="#fff"/></svg>
<div style="position:absolute;left:1015.0px;top:517.65px;font-size:16px;line-height:16px;color:#222;white-space:nowrap;letter-spacing:-0.417px;">34.107.221.82</div>
<div style="position:absolute;left:1124.7px;top:517.65px;font-size:16px;line-height:16px;color:#222;white-space:nowrap;letter-spacing:-1.049px;">HTTP</div>
<div style="position:absolute;left:1224.8px;top:517.65px;font-size:16px;line-height:16px;color:#222;white-space:nowrap;letter-spacing:-1.049px;">HTTP</div>
<div style="position:absolute;left:1424.8px;top:517.65px;font-size:16px;line-height:16px;color:#222;white-space:nowrap;letter-spacing:-0.360px;">1023.0 B/960.0 B</div>
<div style="position:absolute;left:1551px;top:521px;width:3px;height:10px;background:#2f5ea6"></div>
<div style="position:absolute;left:1554px;top:521px;width:3.5px;height:10px;background:#f0b12a"></div>
<div style="position:absolute;left:247px;top:544px;width:1598px;height:1px;background:#cfcfcf"></div>
<div style="position:absolute;left:254.0px;top:553.65px;font-size:16px;line-height:16px;color:#222;white-space:nowrap;letter-spacing:-1.406px;">6</div>
<div style="position:absolute;left:293.9px;top:553.65px;font-size:16px;line-height:16px;color:#222;white-space:nowrap;letter-spacing:-0.196px;width:92.1px;overflow:hidden;">2025-07-03 00:54:14</div>
<div style="position:absolute;left:394.0px;top:553.65px;font-size:16px;line-height:16px;color:#222;white-space:nowrap;letter-spacing:-0.921px;">FGVMEVBUKKJ2_O61</div>
<svg style="position:absolute;left:595px;top:557px" width="16" height="11" viewBox="0 0 16 11"><path d="M0.8 5.3 L5.3 9.6 L14.6 1" fill="none" stroke="#3b7423" stroke-width="2.5"/></svg>
<div style="position:absolute;left:694.8px;top:553.65px;font-size:16px;line-height:16px;color:#222;white-space:nowrap;letter-spacing:-0.570px;">10.33.0.21</div>
<svg style="position:absolute;left:995px;top:557px" width="16" height="11" viewBox="0 0 16 11"><rect x="0.4" y="0.4" width="15.2" height="10.2" fill="#fff" stroke="#8a6a6a" stroke-width="0.8"/><rect x="0.5" y="1.20" width="15" height="0.95" fill="#e33"/><rect x="0.5" y="2.95" width="15" height="0.95" fill="#e33"/><rect x="0.5" y="4.70" width="15" height="0.95" fill="#e33"/><rect x="0.5" y="6.45" width="15" height="0.95" fill="#e33"/><rect x="0.5" y="8.20" width="15" height="0.95" fill="#e33"/><rect x="0.8" y="0.8" width="7.6" height="5.6" fill="#3555b5"/><circle cx="1.80" cy="1.60" r="0.45" fill="#fff"/><circle cx="3.40" cy="1.60" r="0.45" fill="#fff"/><circle cx="5.00" cy="1.60" r="0.45" fill="#fff"/><circle cx="6.60" cy="1.60" r="0.45" fill="#fff"/><circle cx="2.60" cy="2.70" r="0.45" fill="#fff"/><circle cx="4.20" cy="2.70" r="0.45" fill="#fff"/><circle cx="5.80" cy="2.70" r="0.45" fill="#fff"/><circle cx="1.80" cy="3.80" r="0.45" fill="#fff"/><circle cx="3.40" cy="3.80" r="0.45" fill="#fff"/><circle cx="5.00" cy="3.80" r="0.45" fill="#fff"/><circle cx="6.60" cy="3.80" r="0.45" fill="#fff"/><circle cx="2.60" cy="4.90" r="0.45" fill="#fff"/><circle cx="4.20" cy="4.90" r="0.45" fill="#fff"/><circle cx="5.80" cy="4.90" r="0.45" fill="#fff"/></svg>
<div style="position:absolute;left:1015.0px;top:553.65px;font-size:16px;line-height:16px;color:#222;white-space:nowrap;letter-spacing:-0.376px;">172.66.0.227</div>
<div style="position:absolute;left:1124.7px;top:553.65px;font-size:16px;line-height:16px;color:#222;white-space:nowrap;letter-spacing:-1.314px;">HTTPS</div>
<div style="position:absolute;left:1224.8px;top:553.65px;font-size:16px;line-height:16px;color:#222;white-space:nowrap;letter-spacing:-1.314px;">HTTPS</div>
<div style="position:absolute;left:1424.8px;top:553.65px;font-size:16px;line-height:16px;color:#222;white-space:nowrap;letter-spacing:-0.429px;">5.6 KB/4.2 KB</div>
<div style="position:absolute;left:1528px;top:557px;width:23px;height:10px;background:#2f5ea6"></div>
<div style="position:absolute;left:1551px;top:557px;width:17px;height:10px;background:#f0b12a"></div>
<div style="position:absolute;left:247px;top:580px;width:1598px;height:1px;background:#cfcfcf"></div>
<div style="position:absolute;left:254.0px;top:589.65px;font-size:16px;line-height:16px;color:#222;white-space:nowrap;letter-spacing:-1.406px;">7</div>
<div style="position:absolute;left:293.9px;top:589.65px;font-size:16px;line-height:16px;color:#222;white-space:nowrap;letter-spacing:-0.196px;width:92.1px;overflow:hidden;">2025-07-03 00:54:14</div>
<div style="position:absolute;left:394.0px;top:589.65px;font-size:16px;line-height:16px;color:#222;white-space:nowrap;letter-spacing:-0.921px;">FGVMEVBUKKJ2_O61</div>
<svg style="position:absolute;left:595px;top:593px" width="16" height="11" viewBox="0 0 16 11"><path d="M0.8 5.3 L5.3 9.6 L14.6 1" fill="none" stroke="#3b7423" stroke-width="2.5"/></svg>
<div style="position:absolute;left:694.8px;top:589.65px;font-size:16px;line-height:16px;color:#222;white-space:nowrap;letter-spacing:-0.570px;">10.33.0.21</div>
<svg style="position:absolute;left:995px;top:593px" width="16" height="11" viewBox="0 0 16 11"><rect x="0.4" y="0.4" width="15.2" height="10.2" fill="#fff" stroke="#8a6a6a" stroke-width="0.8"/><rect x="0.5" y="1.20" width="15" height="0.95" fill="#e33"/><rect x="0.5" y="2.95" width="15" height="0.95" fill="#e33"/><rect x="0.5" y="4.70" width="15" height="0.95" fill="#e33"/><rect x="0.5" y="6.45" width="15" height="0.95" fill="#e33"/><rect x="0.5" y="8.20" width="15" height="0.95" fill="#e33"/><rect x="0.8" y="0.8" width="7.6" height="5.6" fill="#3555b5"/><circle cx="1.80" cy="1.60" r="0.45" fill="#fff"/><circle cx="3.40" cy="1.60" r="0.45" fill="#fff"/><circle cx="5.00" cy="1.60" r="0.45" fill="#fff"/><circle cx="6.60" cy="1.60" r="0.45" fill="#fff"/><circle cx="2.60" cy="2.70" r="0.45" fill="#fff"/><circle cx="4.20" cy="2.70" r="0.45" fill="#fff"/><circle cx="5.80" cy="2.70" r="0.45" fill="#fff"/><circle cx="1.80" cy="3.80" r="0.45" fill="#fff"/><circle cx="3.40" cy="3.80" r="0.45" fill="#fff"/><circle cx="5.00" cy="3.80" r="0.45" fill="#fff"/><circle cx="6.60" cy="3.80" r="0.45" fill="#fff"/><circle cx="2.60" cy="4.90" r="0.45" fill="#fff"/><circle cx="4.20" cy="4.90" r="0.45" fill="#fff"/><circle cx="5.80" cy="4.90" r="0.45" fill="#fff"/></svg>
<div style="position:absolute;left:1015.0px;top:589.65px;font-size:16px;line-height:16px;color:#222;white-space:nowrap;letter-spacing:-0.460px;width:102.0px;overflow:hidden;">142.251.10.188</div>
<div style="position:absolute;left:1124.7px;top:589.65px;font-size:16px;line-height:16px;color:#222;white-space:nowrap;letter-spacing:0.045px;">tcp/5228</div>
<div style="position:absolute;left:1224.8px;top:589.65px;font-size:16px;line-height:16px;color:#222;white-space:nowrap;letter-spacing:0.045px;">tcp/5228</div>
<div style="position:absolute;left:1424.8px;top:589.65px;font-size:16px;line-height:16px;color:#222;white-space:nowrap;letter-spacing:-0.463px;">5.4 KB/12.3 KB</div>
<div style="position:absolute;left:1536px;top:593px;width:20px;height:10px;background:#2f5ea6"></div>
<div style="position:absolute;left:1556px;top:593px;width:45px;height:10px;background:#f0b12a"></div>
<div style="position:absolute;left:247px;top:616px;width:1598px;height:1px;background:#cfcfcf"></div>
<div style="position:absolute;left:1851px;top:366px;width:8px;height:149px;background:#7f7f7f;border-radius:4px"></div>
<div style="position:absolute;left:246px;top:42px;width:1px;height:576px;background:#c4c4c4"></div>
</body></html>
